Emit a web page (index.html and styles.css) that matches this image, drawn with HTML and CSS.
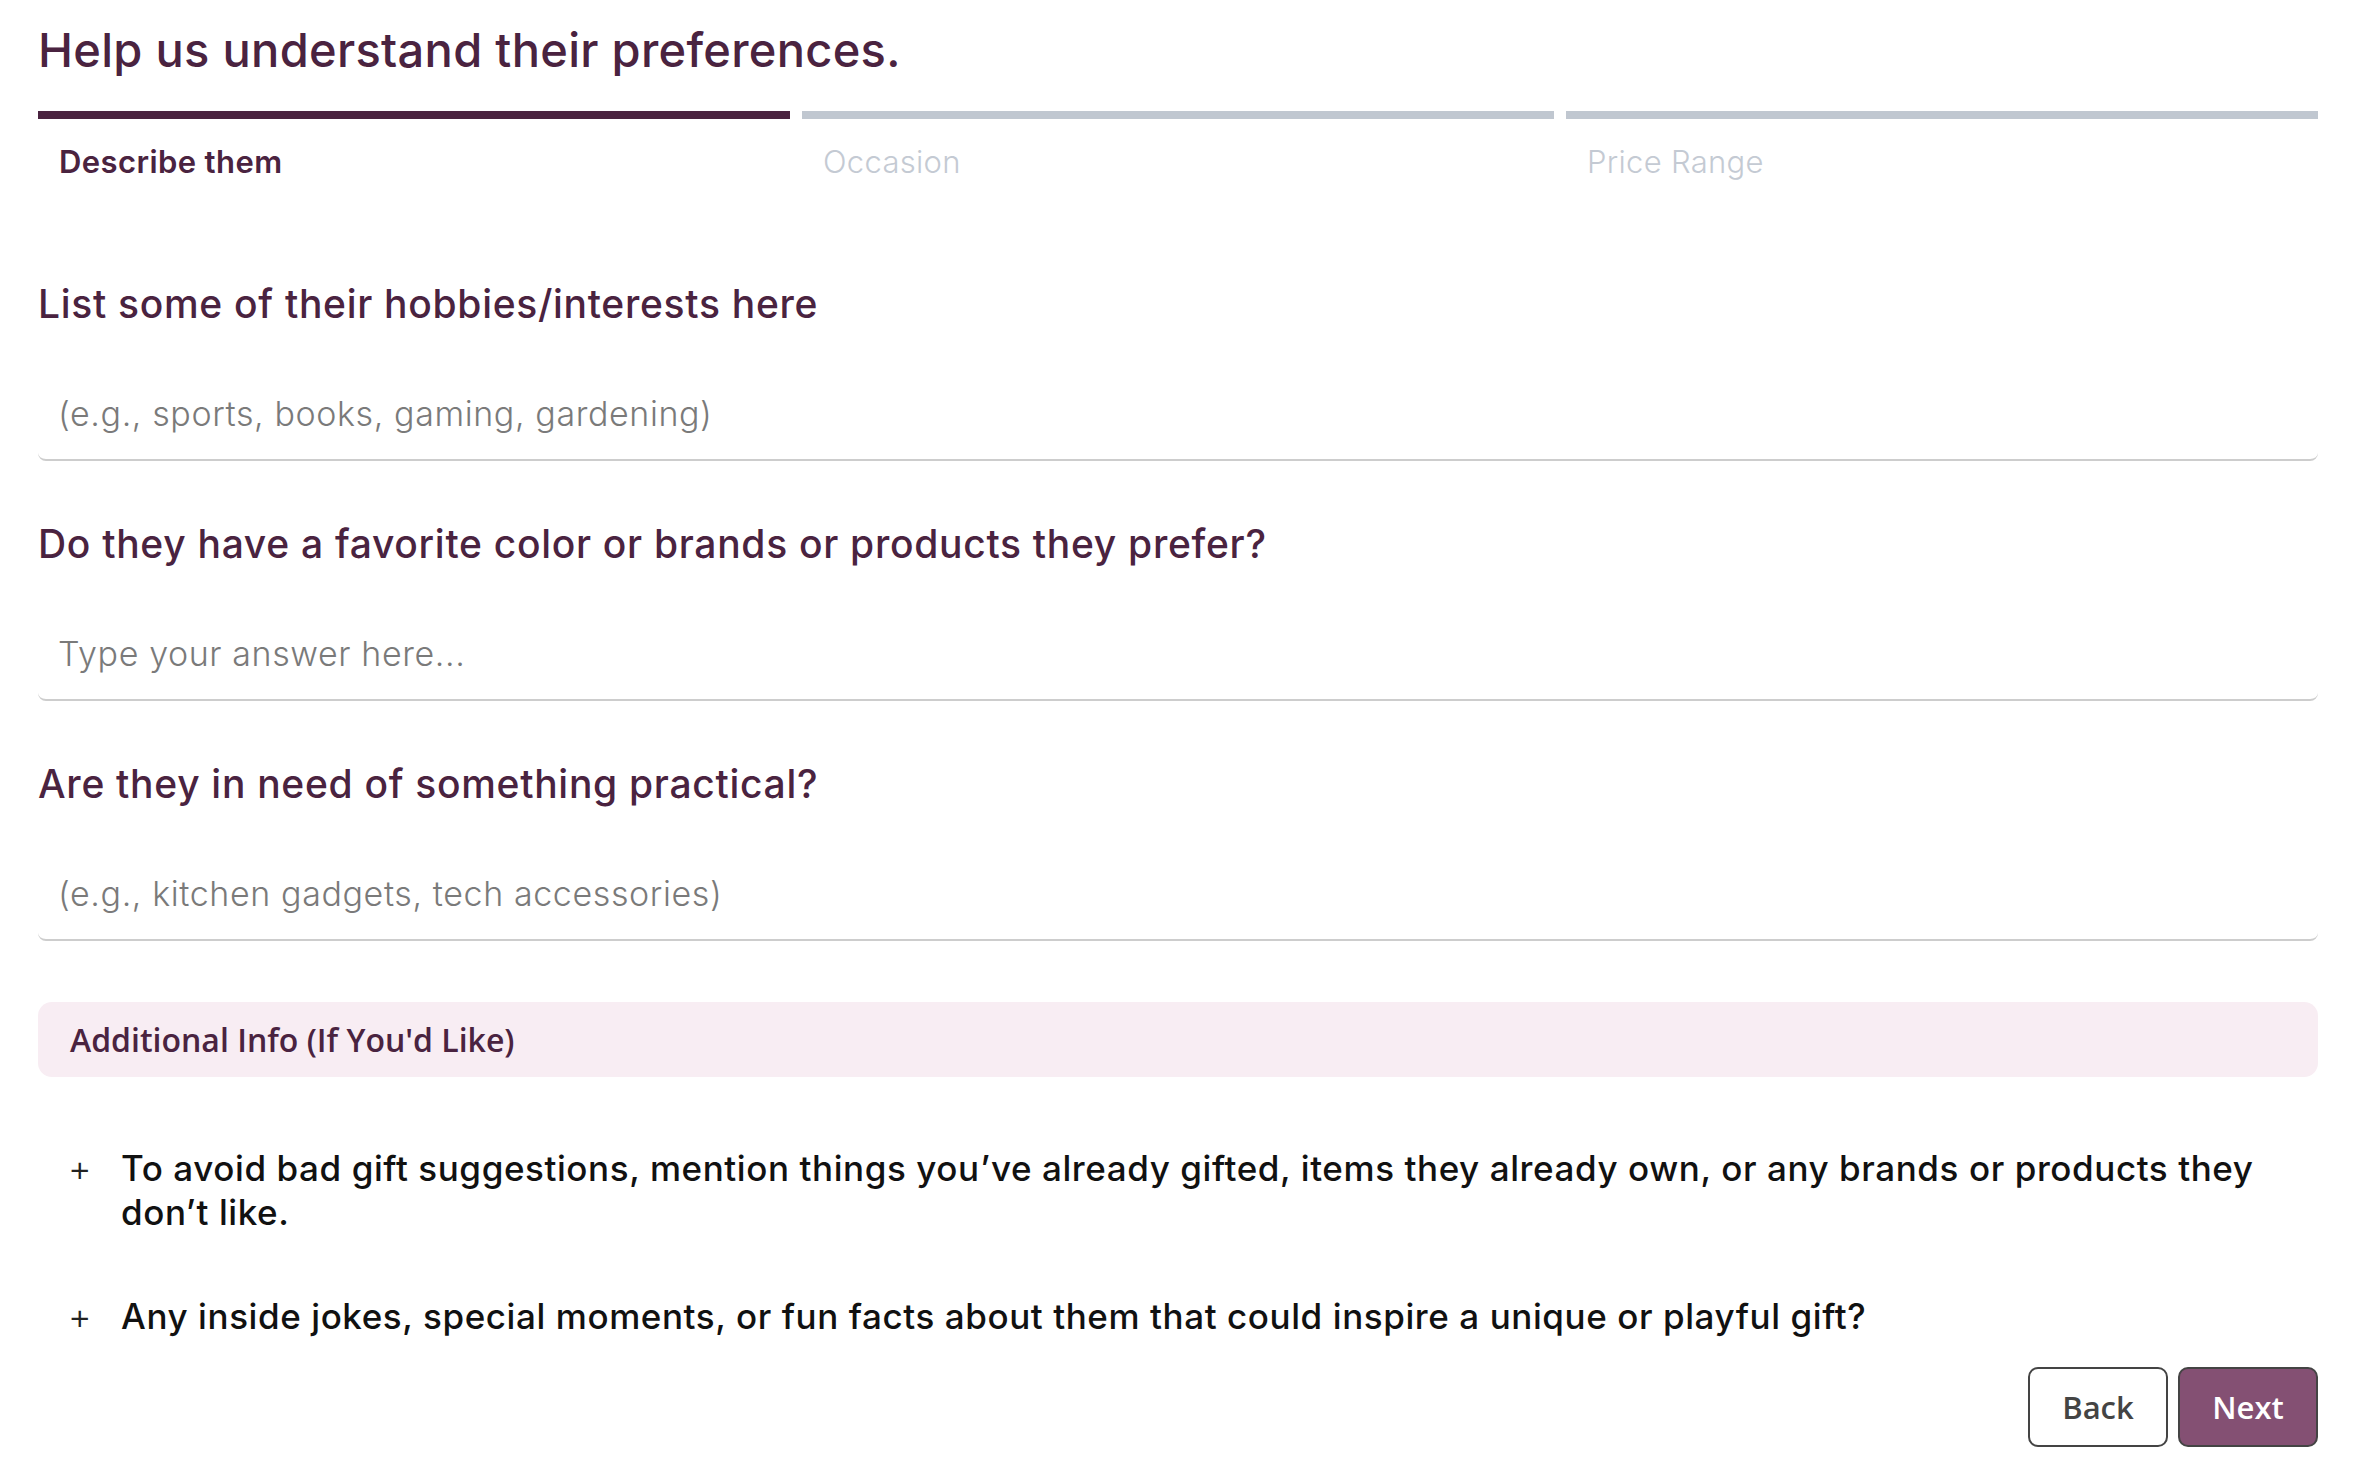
FILE: index.html
```html
<!DOCTYPE html>
<html lang="en">
<head>
<meta charset="utf-8">
<title>Help us understand their preferences</title>
<link rel="stylesheet" href="styles.css">
</head>
<body>
<main class="page">
  <h1 class="title">Help us understand their preferences.</h1>

  <div class="steps">
    <div class="step step-active">
      <div class="step-bar"></div>
      <div class="step-label">Describe them</div>
    </div>
    <div class="step">
      <div class="step-bar"></div>
      <div class="step-label">Occasion</div>
    </div>
    <div class="step">
      <div class="step-bar"></div>
      <div class="step-label">Price Range</div>
    </div>
  </div>

  <form class="form">
    <div class="field">
      <label class="field-label" for="q1">List some of their hobbies/interests here</label>
      <input class="field-input" id="q1" type="text" placeholder="(e.g., sports, books, gaming, gardening)">
    </div>
    <div class="field">
      <label class="field-label" for="q2">Do they have a favorite color or brands or products they prefer?</label>
      <input class="field-input" id="q2" type="text" placeholder="Type your answer here...">
    </div>
    <div class="field">
      <label class="field-label" for="q3">Are they in need of something practical?</label>
      <input class="field-input" id="q3" type="text" placeholder="(e.g., kitchen gadgets, tech accessories)">
    </div>

    <div class="extra-head">Additional Info (If You'd Like)</div>

    <ul class="extra-list">
      <li class="extra-item"><span class="plus">+</span><span class="extra-text">To avoid bad gift suggestions, mention things you’ve already gifted, items they already own, or any brands or products they don’t like.</span></li>
      <li class="extra-item"><span class="plus">+</span><span class="extra-text">Any inside jokes, special moments, or fun facts about them that could inspire a unique or playful gift?</span></li>
    </ul>

    <div class="actions">
      <button type="button" class="btn btn-back">Back</button>
      <button type="button" class="btn btn-next">Next</button>
    </div>
  </form>
</main>
</body>
</html>
```

FILE: styles.css
```css
* {
  box-sizing: border-box;
}

html, body {
  margin: 0;
  padding: 0;
  background: #ffffff;
}

body {
  font-family: "Inter", "Lato", sans-serif;
  color: #4a2340;
}

.page {
  padding: 0 44px 0 38px;
}

.title {
  margin: 22px 0 0 0;
  font-size: 47px;
  line-height: 56px;
  font-weight: 500;
  letter-spacing: 0.3px;
  color: #4a2340;
}

.steps {
  display: grid;
  grid-template-columns: 1fr 1fr 1fr;
  column-gap: 12px;
  margin-top: 33px;
}

.step-bar {
  height: 8px;
  background: #c0c7d0;
}

.step-active .step-bar {
  background: #4a2340;
}

.step-label {
  margin-top: 25px;
  padding-left: 21px;
  font-size: 31px;
  line-height: 36px;
  font-weight: 300;
  letter-spacing: 0.3px;
  color: #c4cad3;
}

.step-active .step-label {
  font-weight: 600;
  letter-spacing: 0.4px;
  color: #4a2340;
}

.form {
  display: flex;
  flex-direction: column;
  margin-top: 102px;
}

.field {
  display: flex;
  flex-direction: column;
  margin-bottom: 61px;
}

.field:last-of-type {
  margin-bottom: 55px;
}

.field-label {
  font-size: 39px;
  line-height: 44px;
  font-weight: 500;
  letter-spacing: 0.7px;
  color: #4a2340;
}

.field-input {
  margin-top: 41px;
  height: 94px;
  padding: 0 20px;
  border: none;
  border-bottom: 2px solid #cdcdcd;
  border-radius: 8px;
  font-family: "Inter", "Lato", sans-serif;
  font-size: 34px;
  letter-spacing: 0.6px;
  color: #333;
  background: #fff;
  outline: none;
}

.field-input::placeholder {
  color: #7a7a7a;
  font-weight: 300;
}

.extra-head {
  height: 75px;
  display: flex;
  align-items: center;
  padding-left: 32px;
  background: #f8edf3;
  border-radius: 14px;
  font-family: "Open Sans", "Noto Sans", sans-serif;
  font-weight: 600;
  font-size: 32px;
  color: #4a2340;
}

.extra-list {
  list-style: none;
  margin: 69px 0 0 0;
  padding: 0;
  display: flex;
  flex-direction: column;
  gap: 60px;
}

.extra-item {
  display: flex;
  align-items: flex-start;
  padding-left: 30px;
  padding-right: 40px;
  font-size: 35px;
  line-height: 44px;
  font-weight: 500;
  letter-spacing: 0.58px;
  color: #111;
}

.plus {
  flex: 0 0 53px;
  font-size: 36px;
  font-weight: 300;
  color: #222;
}

.extra-text {
  flex: 1;
}

.actions {
  display: flex;
  justify-content: flex-end;
  gap: 10px;
  margin-top: 29px;
}

.btn {
  width: 140px;
  height: 80px;
  border: 2px solid #444;
  border-radius: 10px;
  font-family: "Open Sans", "Noto Sans", sans-serif;
  font-weight: 600;
  font-size: 31px;
  cursor: pointer;
}

.btn-back {
  background: #fff;
  color: #444;
}

.btn-next {
  background: #845073;
  color: #fff;
}
```
